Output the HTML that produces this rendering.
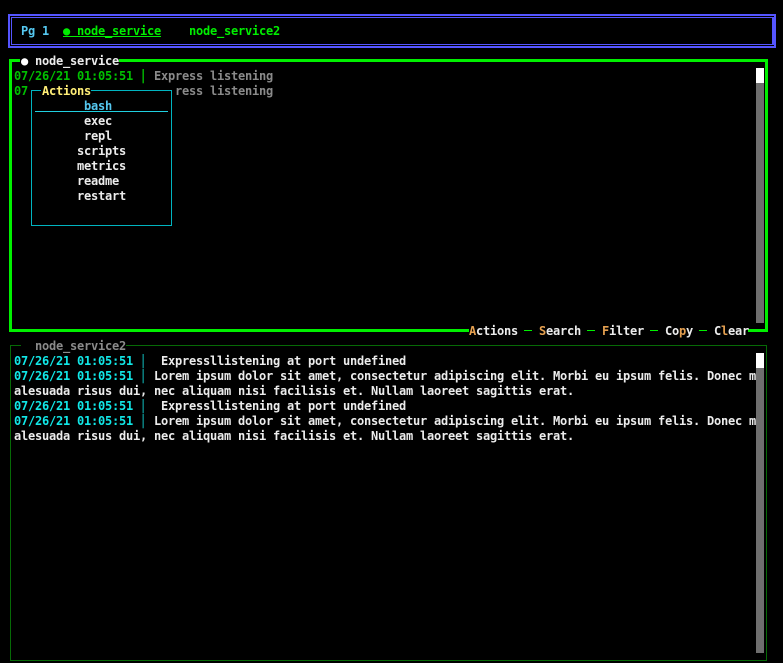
<!DOCTYPE html>
<html>
<head>
<meta charset="utf-8">
<style>
html,body{margin:0;padding:0;background:#000;}
#s{position:relative;width:783px;height:663px;overflow:hidden;background:#000;font-family:"DejaVu Sans Mono","Liberation Mono",monospace;font-size:12px;letter-spacing:-0.224px;font-weight:bold;line-height:15px;color:#e5e5e5;}
.t{position:absolute;white-space:pre;height:15px;}
.b{position:absolute;}
.bg{background:#000;}
.o{color:#e5a050;}
.g{color:#00c000;}
.c{color:#11e8e8;}
.sepg{color:#00a800;font-size:14px;margin-left:-1px;letter-spacing:0;}
.sepc{color:#0a7a7a;font-size:14px;margin-left:-1px;letter-spacing:0;}
.w{color:#ececec;}
.gr{color:#8a8a8a;}
</style>
</head>
<body>
<div id="s">
<!-- tab bar -->
<div class="b" style="left:8px;top:14px;width:764px;height:30px;border:2px solid #5555ff;"></div>
<div class="b" style="left:11px;top:17px;width:760px;height:26px;border:1px solid #5555ff;border-right-width:2px;"></div>
<div class="t" style="left:21px;top:24px;color:#55c8f0;">Pg 1</div>
<div class="t" style="left:63px;top:24px;color:#00ee00;">●</div>
<div class="t" style="left:77px;top:24px;color:#00ee00;">node_service</div>
<div class="b" style="left:63px;top:36px;width:98px;height:1px;background:#00ee00;"></div>
<div class="t" style="left:189px;top:24px;color:#00ee00;">node_service2</div>

<!-- panel 1 -->
<div class="b" style="left:9px;top:59px;width:753px;height:267px;border:3px solid #00f000;"></div>
<div class="b bg" style="left:20px;top:56px;width:99px;height:10px;"></div>
<div class="t" style="left:21px;top:54px;color:#fff;">●</div>
<div class="t w" style="left:35px;top:54px;">node_service</div>
<div class="t g" style="left:14px;top:69px;">07/26/21 01:05:51</div>
<div class="t sepg" style="left:140px;top:69px;">|</div>
<div class="t gr" style="left:154px;top:69px;">Express listening</div>
<div class="t g" style="left:14px;top:84px;">07</div>
<div class="t gr" style="left:175px;top:84px;">ress listening</div>
<div class="b" style="left:756px;top:68px;width:8px;height:255px;background:#6e6e6e;"></div>
<div class="b" style="left:756px;top:68px;width:8px;height:15px;background:#fff;"></div>

<!-- bottom labels -->
<div class="b bg" style="left:469px;top:326px;width:279px;height:10px;"></div>
<div class="t w" style="left:469px;top:324px;"><span class="o">A</span>ctions</div>
<div class="b" style="left:524px;top:330px;width:8px;height:1px;background:#00f000;"></div>
<div class="t w" style="left:539px;top:324px;"><span class="o">S</span>earch</div>
<div class="b" style="left:587px;top:330px;width:8px;height:1px;background:#00f000;"></div>
<div class="t w" style="left:602px;top:324px;"><span class="o">F</span>ilter</div>
<div class="b" style="left:650px;top:330px;width:8px;height:1px;background:#00f000;"></div>
<div class="t w" style="left:665px;top:324px;">Co<span class="o">p</span>y</div>
<div class="b" style="left:699px;top:330px;width:8px;height:1px;background:#00f000;"></div>
<div class="t w" style="left:714px;top:324px;">C<span class="o">l</span>ear</div>

<!-- menu -->
<div class="b bg" style="left:31px;top:90px;width:139px;height:134px;border:1px solid #00b4c0;"></div>
<div class="b bg" style="left:41px;top:85px;width:50px;height:10px;"></div>
<div class="t" style="left:42px;top:84px;color:#ffee77;">Actions</div>
<div class="t" style="left:84px;top:99px;color:#55c8f0;">bash</div>
<div class="b" style="left:35px;top:111px;width:133px;height:1px;background:#20d0e0;"></div>
<div class="t w" style="left:84px;top:114px;">exec</div>
<div class="t w" style="left:84px;top:129px;">repl</div>
<div class="t w" style="left:77px;top:144px;">scripts</div>
<div class="t w" style="left:77px;top:159px;">metrics</div>
<div class="t w" style="left:77px;top:174px;">readme</div>
<div class="t w" style="left:77px;top:189px;">restart</div>

<!-- panel 2 -->
<div class="b" style="left:10px;top:345px;width:755px;height:314px;border:1px solid #066a06;"></div>
<div class="b bg" style="left:21px;top:340px;width:105px;height:12px;"></div>
<div class="t gr" style="left:35px;top:339px;">node_service2</div>

<div class="t c" style="left:14px;top:354px;">07/26/21 01:05:51</div>
<div class="t sepc" style="left:140px;top:354px;">|</div>
<div class="t w" style="left:161px;top:354px;">Expressllistening at port undefined</div>

<div class="t c" style="left:14px;top:369px;">07/26/21 01:05:51</div>
<div class="t sepc" style="left:140px;top:369px;">|</div>
<div class="t w" style="left:154px;top:369px;">Lorem ipsum dolor sit amet, consectetur adipiscing elit. Morbi eu ipsum felis. Donec m</div>
<div class="t w" style="left:14px;top:384px;">alesuada risus dui, nec aliquam nisi facilisis et. Nullam laoreet sagittis erat.</div>

<div class="t c" style="left:14px;top:399px;">07/26/21 01:05:51</div>
<div class="t sepc" style="left:140px;top:399px;">|</div>
<div class="t w" style="left:161px;top:399px;">Expressllistening at port undefined</div>

<div class="t c" style="left:14px;top:414px;">07/26/21 01:05:51</div>
<div class="t sepc" style="left:140px;top:414px;">|</div>
<div class="t w" style="left:154px;top:414px;">Lorem ipsum dolor sit amet, consectetur adipiscing elit. Morbi eu ipsum felis. Donec m</div>
<div class="t w" style="left:14px;top:429px;">alesuada risus dui, nec aliquam nisi facilisis et. Nullam laoreet sagittis erat.</div>

<div class="b" style="left:756px;top:353px;width:8px;height:300px;background:#6e6e6e;"></div>
<div class="b" style="left:756px;top:353px;width:8px;height:15px;background:#fff;"></div>
</div>
</body>
</html>
